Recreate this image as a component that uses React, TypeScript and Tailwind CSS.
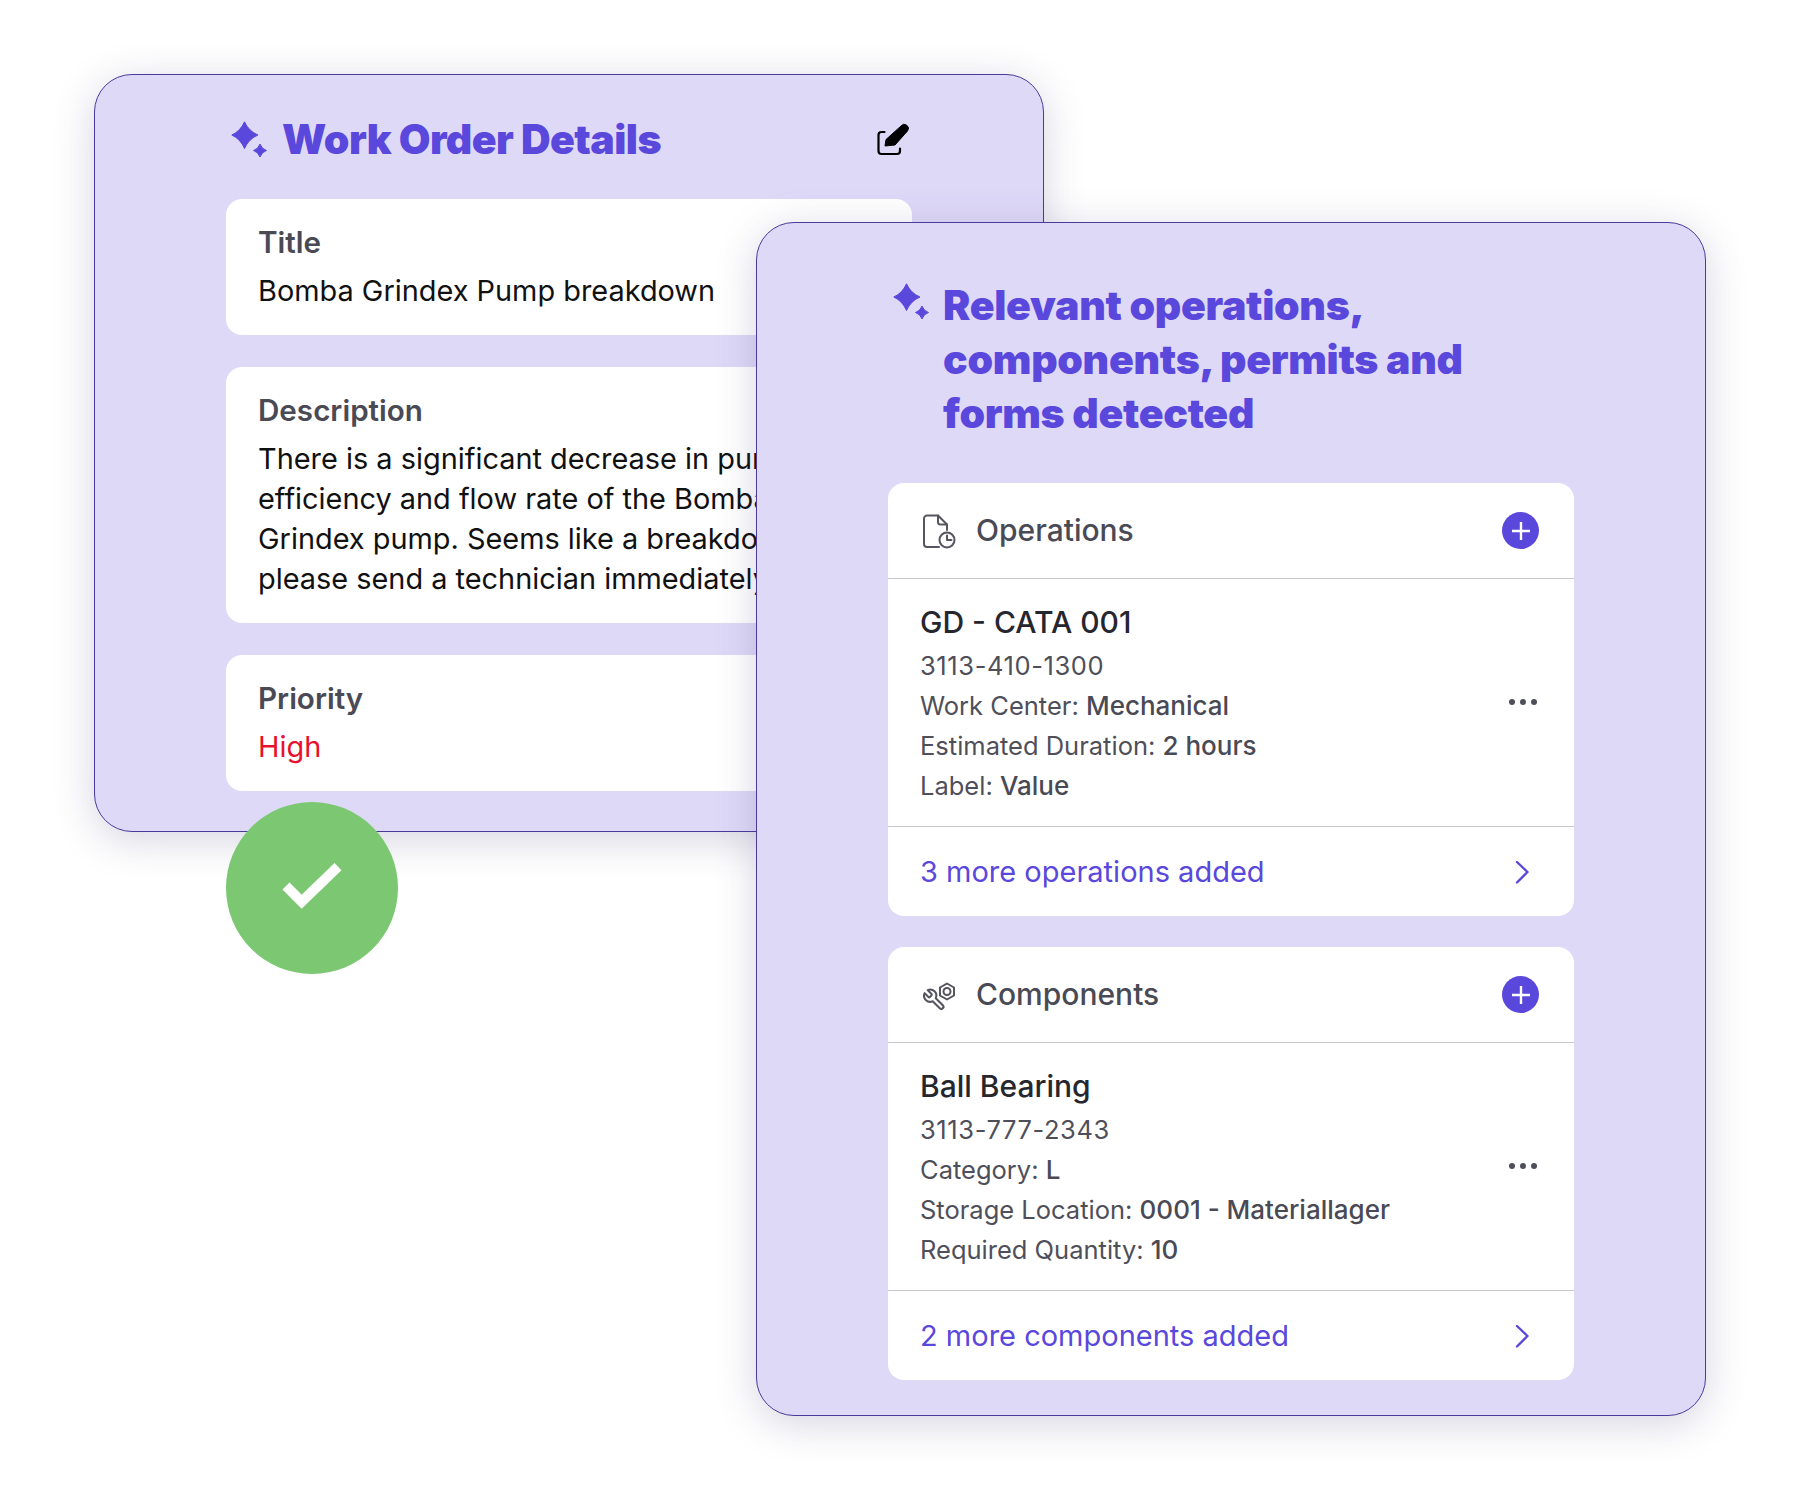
import React from "react";

const ACCENT = "#5a48dc";

function Sparkle({ className }: { className?: string }) {
  return (
    <svg width="37" height="38" viewBox="0 0 37 38" className={`shrink-0 ${className ?? ""}`} fill={ACCENT} stroke={ACCENT} strokeWidth="1" strokeLinejoin="round">
      <path d="M13.5 .8Q17.5 10 27 14Q17.5 18 13.5 27.5Q9.5 18 .8 14Q9.5 10 13.5 .8Z" />
      <path d="M29 23Q30.6 27.9 35.5 29.5Q30.6 31.1 29 36Q27.4 31.1 22.5 29.5Q27.4 27.9 29 23Z" />
    </svg>
  );
}

function EditIcon() {
  return (
    <svg width="34" height="36" viewBox="0 0 34 36" fill="none" className="mr-[2px]">
      <path d="M9 25L10 18.5L25 5A4 4 0 0 1 31.5 10L19 24Z" fill="#000" stroke="#000" strokeLinejoin="round" />
      <path d="M8.5 11H5.5a3 3 0 0 0-3 3V30a3 3 0 0 0 3 3H21a3 3 0 0 0 3-3V27.5" stroke="#000" strokeWidth="2.2" strokeLinecap="round" />
    </svg>
  );
}

function OperationsIcon() {
  return (
    <svg width="36" height="36" viewBox="0 0 36 36" fill="none" stroke="#55555f" strokeWidth="2" strokeLinecap="round" strokeLinejoin="round" className="shrink-0">
      <path d="M18 34H6a3 3 0 0 1-3-3V5.5a3 3 0 0 1 3-3H17L26 11.5V17" />
      <path d="M17 2.5V9a2.5 2.5 0 0 0 2.5 2.5H26" />
      <circle cx="26" cy="27" r="7.5" />
      <path d="M26 22.5V27H30.5" />
    </svg>
  );
}

function ComponentsIcon() {
  return (
    <svg width="36" height="36" viewBox="0 0 36 36" fill="none" stroke="#55555f" strokeWidth="2" strokeLinecap="round" strokeLinejoin="round" className="shrink-0">
      <path d="M26 6.5L33 10.5V18.5L26 22.5L19 18.5V10.5Z" />
      <circle cx="26" cy="14.5" r="3.5" />
      <g transform="translate(25.5,10.5) scale(-1.02,1.02)">
        <path d="M14.7 6.3a1 1 0 0 0 0 1.4l1.6 1.6a1 1 0 0 0 1.4 0l3.77-3.77a6 6 0 0 1-7.94 7.94l-6.91 6.91a2.12 2.12 0 0 1-3-3l6.91-6.91a6 6 0 0 1 7.94-7.94l-3.76 3.76z" />
      </g>
    </svg>
  );
}

function PlusButton() {
  return (
    <div className="flex h-[37px] w-[37px] shrink-0 items-center justify-center rounded-full bg-[#5a48dc]">
      <svg width="20" height="20" viewBox="0 0 20 20" fill="none" stroke="#fff" strokeWidth="2.4">
        <path d="M1 10H19M10 1V19" />
      </svg>
    </div>
  );
}

function Dots() {
  return (
    <div className="flex gap-[5px]">
      <span className="h-[6px] w-[6px] rounded-full bg-[#4f4f5a]" />
      <span className="h-[6px] w-[6px] rounded-full bg-[#4f4f5a]" />
      <span className="h-[6px] w-[6px] rounded-full bg-[#4f4f5a]" />
    </div>
  );
}

function Chevron() {
  return (
    <svg width="14" height="24" viewBox="0 0 14 24" fill="none" stroke={ACCENT} strokeWidth="2.4" strokeLinecap="round" strokeLinejoin="round">
      <path d="M2 2L12.5 12L2 22.5" />
    </svg>
  );
}

function InfoCard({ label, children, className }: { label: string; children: React.ReactNode; className: string }) {
  return (
    <div className={`rounded-[16px] bg-white px-[32px] ${className}`}>
      <div className="text-[29.6px] leading-[40px] font-semibold text-[#4a4a55]">{label}</div>
      <div className="mt-[9px] text-[28.9px] leading-[40px] whitespace-nowrap text-[#111]">{children}</div>
    </div>
  );
}

function Row({ label, value }: { label: string; value: string }) {
  return (
    <div className="text-[25.5px] leading-[40px] text-[#4f4f5a]">
      {label} <span className="text-[26px] font-medium text-[#4a4a55]">{value}</span>
    </div>
  );
}

function ListCard({
  icon,
  heading,
  title,
  code,
  rows,
  more,
}: {
  icon: React.ReactNode;
  heading: string;
  title: string;
  code: string;
  rows: [string, string][];
  more: string;
}) {
  return (
    <div className="overflow-hidden rounded-[16px] bg-white">
      <div className="flex h-[96px] items-center border-b border-[#c9c9cd] pr-[35px] pl-[33px]">
        <div className="flex items-center gap-[19px]">
          {icon}
          <span className="text-[30px] font-medium text-[#4a4a55]">{heading}</span>
        </div>
        <div className="ml-auto">
          <PlusButton />
        </div>
      </div>
      <div className="flex h-[248px] items-center justify-between border-b border-[#c9c9cd] pr-[37px] pb-[2px] pl-[32px]">
        <div>
          <div className="text-[30px] leading-[48px] font-medium text-[#26262e]">{title}</div>
          <div className="text-[25.5px] leading-[40px] tracking-[0.6px] text-[#4f4f5a]">{code}</div>
          {rows.map(([l, v]) => (
            <Row key={l} label={l} value={v} />
          ))}
        </div>
        <Dots />
      </div>
      <div className="flex h-[89px] items-center justify-between pr-[45px] pl-[32px]">
        <span className="text-[29px] text-[#5a48dc]">{more}</span>
        <Chevron />
      </div>
    </div>
  );
}

export default function App() {
  return (
    <div className="relative h-[1500px] w-[1800px] overflow-hidden bg-white font-['Inter',sans-serif]">
      {/* Work order card */}
      <div className="mt-[74px] ml-[94px] h-[758px] w-[950px] rounded-[38px] border border-[#4a3a9a] bg-[#dfd9f8] pt-[34px] pr-[131px] pl-[131px] shadow-[0_8px_40px_rgba(70,60,120,0.22)]">
        <div className="flex h-[60px] items-center justify-between">
          <div className="flex items-center gap-[14px] pl-[5px]">
            <Sparkle className="mt-[2px]" />
            <span className="text-[41px] leading-[60px] font-black tracking-[-0.55px] text-[#5a48dc]">Work Order Details</span>
          </div>
          <EditIcon />
        </div>
        <div className="mt-[30px] flex flex-col gap-[32px]">
          <InfoCard label="Title" className="h-[136px] pt-[23px]">
            Bomba Grindex Pump breakdown
          </InfoCard>
          <InfoCard label="Description" className="h-[256px] pt-[23px]">
            There is a significant decrease in pump
            <br />
            efficiency and flow rate of the Bomba
            <br />
            Grindex pump. Seems like a breakdown,
            <br />
            please send a technician immediately.
          </InfoCard>
          <InfoCard label="Priority" className="h-[136px] pt-[23px]">
            <span className="text-[#e8112d]">High</span>
          </InfoCard>
        </div>
      </div>

      {/* Success badge */}
      <div className="absolute top-[802px] left-[226px] flex h-[172px] w-[172px] items-center justify-center rounded-full bg-[#7cc872]">
        <svg width="172" height="172" viewBox="0 0 172 172" fill="none" stroke="#fff" strokeWidth="10">
          <path d="M60 84L75.7 99.7L112 64.7" />
        </svg>
      </div>

      {/* Detected items card */}
      <div className="absolute top-[222px] left-[756px] h-[1194px] w-[950px] rounded-[38px] border border-[#4a3a9a] bg-[#dfd9f8] pt-[55px] pr-[131px] pl-[131px] shadow-[0_8px_40px_rgba(70,60,120,0.22)]">
        <div className="flex gap-[13px] pl-[5px]">
          <Sparkle className="mt-[5px]" />
          <div className="text-[41px] leading-[54px] font-black tracking-[-0.3px] text-[#5a48dc]">
            Relevant operations,
            <br />
            components, permits and
            <br />
            forms detected
          </div>
        </div>
        <div className="mt-[43px] flex flex-col gap-[31px]">
          <ListCard
            icon={<OperationsIcon />}
            heading="Operations"
            title="GD - CATA 001"
            code="3113-410-1300"
            rows={[
              ["Work Center:", "Mechanical"],
              ["Estimated Duration:", "2 hours"],
              ["Label:", "Value"],
            ]}
            more="3 more operations added"
          />
          <ListCard
            icon={<ComponentsIcon />}
            heading="Components"
            title="Ball Bearing"
            code="3113-777-2343"
            rows={[
              ["Category:", "L"],
              ["Storage Location:", "0001 - Materiallager"],
              ["Required Quantity:", "10"],
            ]}
            more="2 more components added"
          />
        </div>
      </div>
    </div>
  );
}
